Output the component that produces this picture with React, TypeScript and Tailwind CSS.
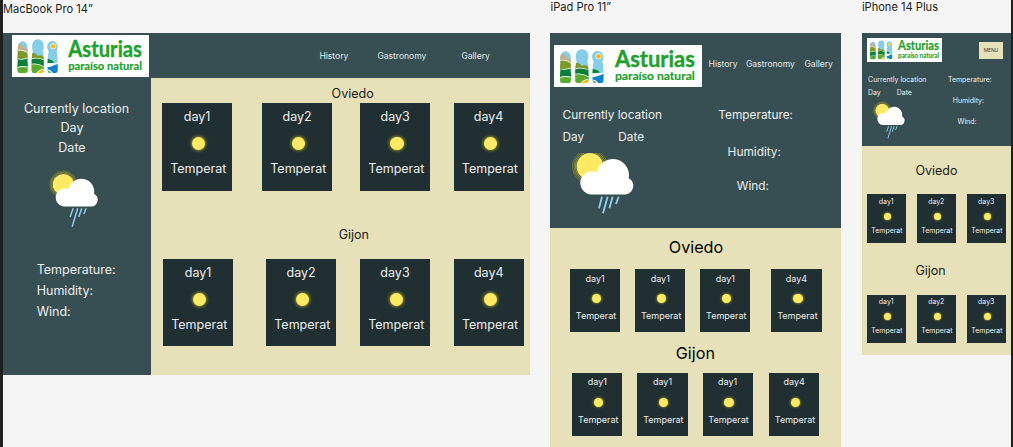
import clsx from "clsx";

function Logo({ className }: { className: string }) {
  return (
    <svg viewBox="0 0 148 42" preserveAspectRatio="none" className={clsx("block shrink-0 bg-white", className)}>
      <defs>
        <clipPath id="p1"><path d="M6.3 14.5C5.6 3.6 17.6 3.6 16.8 14.5C17.4 16 16.6 17.5 16.6 18.5C17.6 21 16.8 24 16.6 26C17.6 30 17 33 16.8 36Q16.6 38 14.5 38H8.6Q6.3 38 6.2 36C6 33 5.8 30 6.4 26C5.8 23 5.8 21 6.4 18.5C6.4 17.5 5.8 16 6.3 14.5Z" /></clipPath>
        <clipPath id="p2"><path d="M21.8 12C21 1.5 35 1.5 34.4 12C34.4 14 33.4 15.5 33.4 17C34.8 20 34.6 32 34.4 35.5Q34.3 38 31.5 38H24.3Q21.4 38 21.4 35.5C21.2 32 21 20 22.6 17C22.6 15.5 21.8 14 21.8 12Z" /></clipPath>
        <clipPath id="p3"><path d="M38.2 12.5C37.4 3.8 49.8 3.8 49.4 12.5C49.2 15 48.4 15.8 48.4 17C49.8 20 49.6 32 49.6 35.5Q49.4 38 47 38H41.4Q39 38 38.8 35.5C38.6 32 38.4 20 39.8 17C39.8 15.8 38.4 15 38.2 12.5Z" /></clipPath>
      </defs>
      <g clipPath="url(#p1)">
        <path fill="#84cee9" d="M5 4H18V40H5Z" />
        <path fill="#c1b08c" d="M5 11Q9 7 12 11T18 14V40H5Z" />
        <path fill="#fff" d="M5 15.5Q11 13 18 18V40H5Z" />
        <path fill="#7b9a27" d="M5 16.2Q11 14 18 19V40H5Z" />
        <path fill="#fff" d="M5 23.4Q12 25 18 22V40H5Z" />
        <path fill="#078139" d="M5 24Q12 26 18 23V40H5Z" />
        <path fill="#fff" d="M5 32.4Q11 30 18 32V40H5Z" />
        <path fill="#5aab2c" d="M5 33.2Q11 30.8 18 32.8V40H5Z" />
      </g>
      <g clipPath="url(#p2)">
        <path fill="#84cee9" d="M20 2H36V40H20Z" />
        <path fill="#7b9a27" d="M20 18Q25 17 28 21Q32 19 36 23V40H20Z" />
        <path fill="#fff" d="M20 24Q26 21 36 25V40H20Z" />
        <path fill="#078139" d="M20 24.7Q27 21.7 36 25.7V40H20Z" />
        <path fill="#fff" d="M20 29Q28 27 36 32V40H20Z" />
        <path fill="#5aab2c" d="M20 29.7Q28 27.7 36 32.7V40H20Z" />
        <path fill="#fff" d="M26 39Q29 33.6 36 33.6V40H26Z" />
        <path fill="#fdb913" d="M27 39Q30 34.4 36 34.4V40H27Z" />
      </g>
      <g clipPath="url(#p3)">
        <path fill="#84cee9" d="M37 2H51V40H37Z" />
        <circle cx="44.6" cy="11.3" r="3" fill="#fff" />
        <circle cx="44.6" cy="11.3" r="2.4" fill="#fdb913" />
        <path fill="#078139" d="M37 24Q43 24 46 27.5L37 29Z" />
        <path fill="#fff" d="M37 27.8Q44 29 51 27.4V40H37Z" />
        <path fill="#0a82d4" d="M37 32Q44 31.5 51 28.2V40H37Z" />
        <path fill="#fff" d="M37 29.6Q42 29.6 44 31L37 32.5ZM37 34.6Q42 34 45 39H37Z" />
        <path fill="#5aab2c" d="M37 35.4Q41 35 43.5 39H37Z" />
      </g>
      <text x="61" y="22.3" textLength="80" lengthAdjust="spacingAndGlyphs" className="fill-[#1ea22d] stroke-[#1ea22d] stroke-[0.4px] font-[family-name:Lato] text-[22.5px] font-bold">Asturias</text>
      <text x="61" y="35" textLength="80" lengthAdjust="spacingAndGlyphs" className="fill-[#1ea22d] stroke-[#1ea22d] stroke-[0.2px] font-[family-name:Lato] text-[12px] font-bold">paraíso natural</text>
    </svg>
  );
}

function Weather({ className, full }: { className: string; full?: boolean }) {
  return (
    <svg viewBox={full ? "0 0 72 75" : "0 5 72 65"} preserveAspectRatio="none" className={clsx("block shrink-0", className)}>
      <g fill="none" stroke="#b5b01c" strokeWidth="0.8">
        <circle cx="22" cy="18.5" r="14.6" />
        <circle cx="22" cy="18.5" r="16" opacity="0.75" />
        <circle cx="22" cy="18.5" r="17.4" opacity="0.5" />
      </g>
      <circle cx="22" cy="18.5" r="13.4" fill="#ffea62" />
      <path fill="#fff" d="M23.5 46.5A11.6 11.6 0 1 1 28.8 24.4A16.2 16.2 0 0 1 60.7 30.2A8.7 8.7 0 0 1 57.3 46.5Z" />
      <path stroke="#8fd3ee" strokeWidth="1.8" d={full ? "M34.3 48.7L30.5 59.7M40.1 48.7L33 72.2M45.2 48.7L41.4 59.7M50.7 48.7L47.8 56" : "M34 48.8L31 60.2M39.6 48.8L35 65.3M44.6 48.8L41.4 60.2M50.6 48.8L48 56"} />
    </svg>
  );
}

function Card({ day, className }: { day: string; className?: string }) {
  return (
    <div className={clsx("flex h-[6.96em] w-[5.57em] shrink-0 flex-col items-center bg-[#202f32] pt-[0.34em] leading-[1.44em] text-[#eceeee]", className)}>
      <div>{day}</div>
      <div className="mt-[0.9em] ml-[0.3em] size-[1.04em] rounded-full bg-[#ffea62] shadow-[0_0_0.25em_0.06em_#9d9a2c]" />
      <div className="mt-[0.79em] ml-[0.2em]">Temperat</div>
    </div>
  );
}

const nav = "text-[8.55px] leading-3 text-[#e4e8e8]";

export default function App() {
  return (
    <div className="flex h-[447px] w-[1013px] overflow-hidden bg-[#f5f5f5] font-[family-name:Inter,sans-serif] text-[12.52px] whitespace-nowrap text-[#1c1c19]">
      <div className="w-[3px] shrink-0 bg-[#202020]" />

      <section className="w-[526.8px] shrink-0">
        <h2 className="h-[33.2px] pt-[1.4px] text-[11.1px] leading-4">MacBook Pro 14”</h2>
        <header className="flex h-[45px] bg-[#374f52] pt-[1.8px] pl-[9.3px]">
          <Logo className="h-[42px] w-[136.4px]" />
          <nav className={clsx("flex pt-[14.8px]", nav)}>
            <a className="ml-[170.7px] w-[58px]">History</a>
            <a className="w-[84px]">Gastronomy</a>
            <a>Gallery</a>
          </nav>
        </header>
        <div className="flex h-[297.2px]">
          <aside className="w-[148px] shrink-0 bg-[#374f52] pt-[20.8px] text-[#eceeee]">
            <div className="flex w-[138px] flex-col items-center leading-[19.5px]">
              <div className="ml-[9px]">Currently location</div>
              <div>Day</div>
              <div>Date</div>
            </div>
            <Weather full className="mt-[12.5px] ml-[42.6px] h-[59px] w-[57px]" />
            <div className="mt-[29.9px] ml-[33.7px] leading-[21.3px]">
              <div>Temperature:</div>
              <div>Humidity:</div>
              <div>Wind:</div>
            </div>
          </aside>
          <main className="grow bg-[#e6e1b9] pt-[5.6px]">
            <h3 className="ml-[180.6px] leading-5">Oviedo</h3>
            <div className="-mt-[0.4px] flex pl-[11.2px]">
              <Card day="day1" />
              <Card day="day2" className="ml-[30.3px]" />
              <Card day="day3" className="ml-[28.3px]" />
              <Card day="day4" className="ml-[23.8px]" />
            </div>
            <h3 className="mt-[34.6px] ml-[187.7px] leading-5">Gijon</h3>
            <div className="mt-[14.2px] flex pl-[12.2px]">
              <Card day="day1" />
              <Card day="day2" className="ml-[33.3px]" />
              <Card day="day3" className="ml-[24.2px]" />
              <Card day="day4" className="ml-[24px]" />
            </div>
          </main>
        </div>
      </section>

      <section className="ml-[20.7px] flex w-[290.4px] shrink-0 flex-col">
        <h2 className="h-[33.2px] -mt-px mb-px text-[11.1px] leading-4">iPad Pro 11”</h2>
        <header className="h-[195.3px] shrink-0 bg-[#374f52] pt-[11.8px] text-[11.85px] leading-4 text-[#eceeee]">
          <div className="flex pl-[3.3px]">
            <Logo className="h-[42px] w-[147.8px]" />
            <nav className={clsx("flex pt-[13px]", nav)}>
              <a className="ml-[7px] w-[37.3px]">History</a>
              <a className="w-[58.6px]">Gastronomy</a>
              <a>Gallery</a>
            </nav>
          </div>
          <div className="flex pt-5 pl-[12px]">
            <div className="w-[155.8px]">
              <div>Currently location</div>
              <div className="mt-[6.2px] flex">
                <span className="w-[55.8px]">Day</span>
                <span>Date</span>
              </div>
              <Weather className="mt-[7.8px] ml-[5.5px] h-[65px] w-[72px]" />
            </div>
            <div>
              <div className="mt-[0.5px]">Temperature:</div>
              <div className="mt-[20.5px] ml-[9.3px]">Humidity:</div>
              <div className="mt-[18px] ml-[18.5px]">Wind:</div>
            </div>
          </div>
        </header>
        <main className="grow bg-[#e6e1b9] pt-[7.5px] text-[16.2px] leading-[22px] text-black">
          <h3 className="ml-[118.3px]">Oviedo</h3>
          <div className="mt-[11.5px] flex pl-[19.6px] text-[9px]">
            <Card day="day1" />
            <Card day="day1" className="ml-[15px]" />
            <Card day="day1" className="ml-[15px]" />
            <Card day="day4" className="ml-[21px]" />
          </div>
          <h3 className="mt-[10px] ml-[125.3px]">Gijon</h3>
          <div className="mt-[9.3px] flex pl-[21.8px] text-[9px]">
            <Card day="day1" />
            <Card day="day1" className="ml-[15px]" />
            <Card day="day1" className="ml-[15px]" />
            <Card day="day4" className="ml-[16.4px]" />
          </div>
        </main>
      </section>

      <section className="ml-[21px] w-[149px] shrink-0">
        <h2 className="h-[33.2px] -mt-px mb-px text-[11.1px] leading-4">iPhone 14 Plus</h2>
        <header className="h-[112.8px] bg-[#374f52] pt-[5px] pl-[5px] text-[6.95px] leading-[10px] text-[#eceeee]">
          <div className="flex">
            <Logo className="h-[23.5px] w-[75.5px]" />
            <button className="mt-[3.6px] ml-[36.5px] h-[17px] w-6 bg-[#e6e1b9] text-center text-[4.8px] leading-[17px] text-[#33332b]">MENU</button>
          </div>
          <div className="flex pt-[13.2px] pl-[1.2px]">
            <div className="w-[80px]">
              <div>Currently location</div>
              <div className="mt-[3px] flex">
                <span className="w-[28.7px]">Day</span>
                <span>Date</span>
              </div>
              <Weather full className="mt-[3.5px] ml-[2.8px] h-[38.7px] w-[37px]" />
            </div>
            <div>
              <div>Temperature:</div>
              <div className="mt-[11.6px] ml-[4.7px]">Humidity:</div>
              <div className="mt-[10.3px] ml-[9.5px]">Wind:</div>
            </div>
          </div>
        </header>
        <main className="h-[209.5px] bg-[#e6e1b9] pt-[14.7px]">
          <h3 className="ml-[53.5px] leading-5">Oviedo</h3>
          <div className="mt-[13.6px] flex gap-[11.3px] pl-[5px] text-[6.95px]">
            <Card day="day1" />
            <Card day="day2" />
            <Card day="day3" />
          </div>
          <h3 className="mt-[18.4px] ml-[53.5px] leading-5">Gijon</h3>
          <div className="mt-[13.6px] flex gap-[11.3px] pl-[5px] text-[6.95px]">
            <Card day="day1" />
            <Card day="day2" />
            <Card day="day3" />
          </div>
        </main>
      </section>
      <div className="grow bg-[#20201c]" />
    </div>
  );
}
